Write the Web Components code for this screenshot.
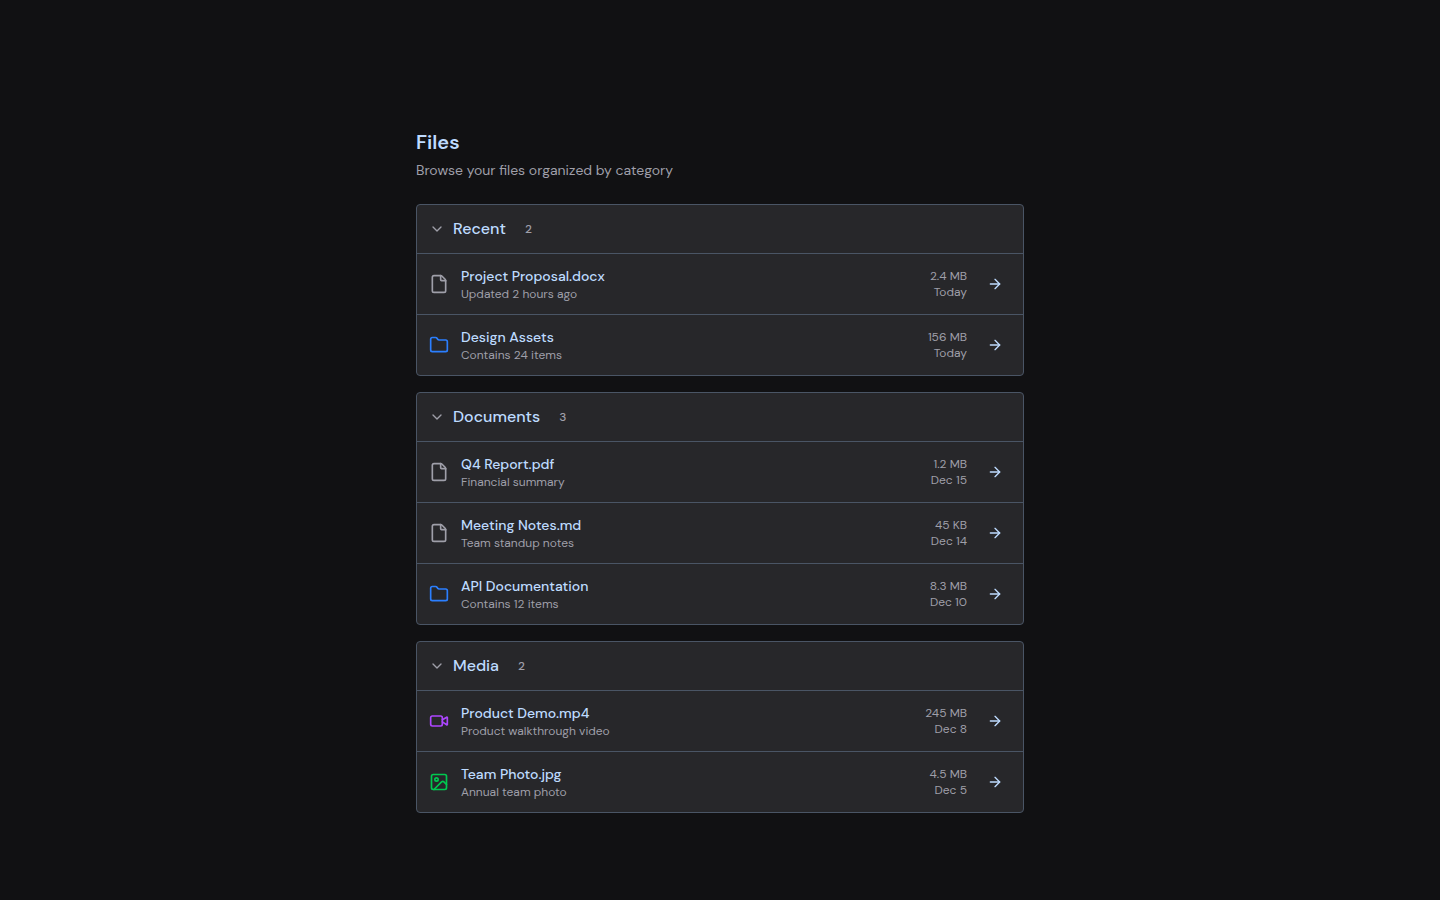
<!DOCTYPE html>
<html lang="en">
<head>
  <meta charset="utf-8">
  <meta name="viewport" content="width=device-width, initial-scale=1">
  <title>Files</title>
  <style>
    body {
      margin: 0;
      background: #111113;
      color: #bedbff;
      font-family: "DM Sans", Inter, "Liberation Sans", sans-serif;
    }
  </style>
</head>
<body>
  <file-browser heading="Files" description="Browse your files organized by category">
    <file-group name="Recent" count="2">
      <file-row kind="file" name="Project Proposal.docx" note="Updated 2 hours ago" size="2.4 MB" date="Today"></file-row>
      <file-row kind="folder" name="Design Assets" note="Contains 24 items" size="156 MB" date="Today"></file-row>
    </file-group>
    <file-group name="Documents" count="3">
      <file-row kind="file" name="Q4 Report.pdf" note="Financial summary" size="1.2 MB" date="Dec 15"></file-row>
      <file-row kind="file" name="Meeting Notes.md" note="Team standup notes" size="45 KB" date="Dec 14"></file-row>
      <file-row kind="folder" name="API Documentation" note="Contains 12 items" size="8.3 MB" date="Dec 10"></file-row>
    </file-group>
    <file-group name="Media" count="2">
      <file-row kind="video" name="Product Demo.mp4" note="Product walkthrough video" size="245 MB" date="Dec 8"></file-row>
      <file-row kind="image" name="Team Photo.jpg" note="Annual team photo" size="4.5 MB" date="Dec 5"></file-row>
    </file-group>
  </file-browser>

  <script>
    const icons = {
      chevron: '<path d="m6 9 6 6 6-6"/>',
      arrow: '<path d="M5 12h14"/><path d="m12 5 7 7-7 7"/>',
      file: '<path d="M6 22a2 2 0 0 1-2-2V4a2 2 0 0 1 2-2h8a2.4 2.4 0 0 1 1.704.706l3.588 3.588A2.4 2.4 0 0 1 20 8v12a2 2 0 0 1-2 2z"/><path d="M14 2v5a1 1 0 0 0 1 1h5"/>',
      folder: '<path d="M20 20a2 2 0 0 0 2-2V8a2 2 0 0 0-2-2h-7.9a2 2 0 0 1-1.69-.9L9.6 3.9A2 2 0 0 0 7.93 3H4a2 2 0 0 0-2 2v13a2 2 0 0 0 2 2Z"/>',
      video: '<path d="m16 13 5.223 3.482a.5.5 0 0 0 .777-.416V7.87a.5.5 0 0 0-.752-.432L16 10.5"/><rect x="2" y="6" width="14" height="12" rx="2"/>',
      image: '<rect x="3" y="3" width="18" height="18" rx="2"/><circle cx="9" cy="9" r="2"/><path d="m21 15-3.086-3.086a2 2 0 0 0-2.828 0L6 21"/>'
    };

    const colors = {
      file: "#9f9fa9",
      folder: "#2b7fff",
      video: "#ad46ff",
      image: "#00c950"
    };

    function icon(name, size) {
      return `<svg width="${size}" height="${size}" viewBox="0 0 24 24" fill="none" stroke="currentColor" stroke-width="2" stroke-linecap="round" stroke-linejoin="round" aria-hidden="true">${icons[name]}</svg>`;
    }

    class FileBrowser extends HTMLElement {
      constructor() {
        super();
        this.shadowDOM = this.attachShadow({ mode: "open" });
      }

      connectedCallback() {
        this.render();
      }

      render() {
        this.shadowDOM.innerHTML = `
          <style>
            * {
              margin: 0;
              padding: 0;
              box-sizing: border-box;
            }

            :host {
              display: flex;
              justify-content: center;
              align-items: center;
              min-height: 100vh;
              padding: 16px;
              box-sizing: border-box;
            }

            main {
              width: 100%;
              max-width: 608px;
              padding-top: 40px;
            }

            h1 {
              font-weight: 600;
              font-size: 20px;
              line-height: 28px;
            }

            header p {
              padding-top: 4px;
              color: #9f9fa9;
              font-size: 14px;
              line-height: 20px;
            }

            .groups {
              display: flex;
              flex-direction: column;
              gap: 16px;
              padding-top: 24px;
            }
          </style>
          <main>
            <header>
              <h1>${this.getAttribute("heading")}</h1>
              <p>${this.getAttribute("description")}</p>
            </header>
            <div class="groups"><slot></slot></div>
          </main>`;
      }
    }

    class FileGroup extends HTMLElement {
      constructor() {
        super();
        this.shadowDOM = this.attachShadow({ mode: "open" });
      }

      connectedCallback() {
        this.render();
        const button = this.shadowDOM.querySelector("button");
        button.addEventListener("click", () => {
          const open = button.getAttribute("aria-expanded") === "true";
          button.setAttribute("aria-expanded", String(!open));
          this.shadowDOM.querySelector(".rows").hidden = open;
        });
      }

      render() {
        this.shadowDOM.innerHTML = `
          <style>
            * {
              margin: 0;
              padding: 0;
              box-sizing: border-box;
            }

            :host {
              display: block;
              overflow: hidden;
              border: 1px solid #4a5565;
              border-radius: 4px;
              background: #27272a;
            }

            button {
              display: flex;
              align-items: center;
              gap: 8px;
              width: 100%;
              padding: 12px;
              border: 0;
              background: none;
              color: inherit;
              font: inherit;
              font-weight: 500;
              font-size: 16px;
              line-height: 24px;
              text-align: left;
              cursor: pointer;
            }

            svg {
              color: #9f9fa9;
            }

            button[aria-expanded="false"] svg {
              transform: rotate(-90deg);
            }

            .count {
              padding: 0 11px;
              color: #9f9fa9;
              font-size: 12px;
              line-height: 16px;
            }
          </style>
          <h2>
            <button type="button" aria-expanded="true">
              ${icon("chevron", 16)}
              <span>${this.getAttribute("name")}</span>
              <span class="count">${this.getAttribute("count")}</span>
            </button>
          </h2>
          <div class="rows"><slot></slot></div>`;
      }
    }

    class FileRow extends HTMLElement {
      constructor() {
        super();
        this.shadowDOM = this.attachShadow({ mode: "open" });
      }

      connectedCallback() {
        this.render();
      }

      render() {
        const kind = this.getAttribute("kind");
        const name = this.getAttribute("name");
        this.shadowDOM.innerHTML = `
          <style>
            * {
              margin: 0;
              padding: 0;
              box-sizing: border-box;
            }

            :host {
              display: flex;
              align-items: center;
              gap: 12px;
              padding: 12px;
              border-top: 1px solid #4a5565;
              font-size: 12px;
              line-height: 16px;
            }

            svg {
              display: block;
              flex: none;
            }

            .kind {
              color: ${colors[kind]};
            }

            .text {
              flex: 1;
              min-width: 0;
            }

            .name {
              font-weight: 500;
              font-size: 14px;
              line-height: 20px;
            }

            .note,
            .meta {
              color: #9f9fa9;
            }

            .meta {
              text-align: right;
            }

            button {
              display: flex;
              align-items: center;
              justify-content: center;
              width: 32px;
              height: 32px;
              border: 0;
              border-radius: 4px;
              background: none;
              color: inherit;
              cursor: pointer;
            }
          </style>
          <div class="kind">${icon(kind, 20)}</div>
          <div class="text">
            <p class="name">${name}</p>
            <p class="note">${this.getAttribute("note")}</p>
          </div>
          <div class="meta">
            <p>${this.getAttribute("size")}</p>
            <p>${this.getAttribute("date")}</p>
          </div>
          <button type="button" aria-label="Open ${name}">${icon("arrow", 16)}</button>`;
      }
    }

    customElements.define("file-browser", FileBrowser);
    customElements.define("file-group", FileGroup);
    customElements.define("file-row", FileRow);
  </script>
</body>
</html>
